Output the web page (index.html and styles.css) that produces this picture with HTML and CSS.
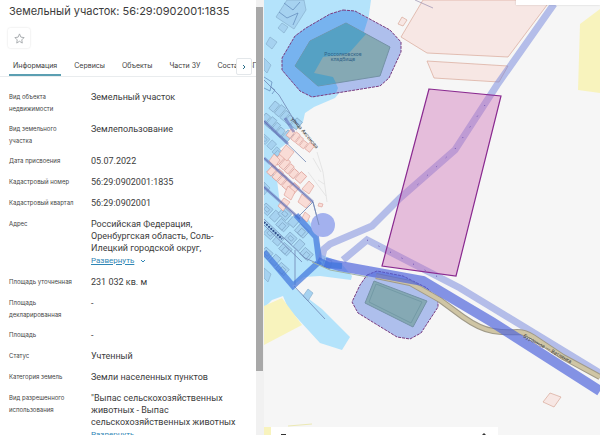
FILE: index.html
```
<!DOCTYPE html>
<html lang="ru">
<head>
    <meta charset="UTF-8">
    <meta name="viewport" content="width=device-width, initial-scale=1.0">
    <title>Земельный участок</title>
    <link rel="stylesheet" href="styles.css">
</head>
<body>
    <div class="layout">
        <aside class="panel">
            <h1>Земельный участок: 56:29:0902001:1835</h1>
            <button class="favorite" aria-label="В избранное">
                <svg viewBox="0 0 24 24"><path d="M12 2l3 7 7 1-5 5 1 7-6-4-6 4 1-7-5-5 7-1z"/></svg>
            </button>
            <nav class="tabs">
                <button class="tab active">Информация</button>
                <button class="tab">Сервисы</button>
                <button class="tab">Объекты</button>
                <button class="tab">Части ЗУ</button>
                <button class="tab">Состав ЕЗП</button>
                <button class="tabs-next" aria-label="Далее">
                    <svg viewBox="0 0 8 8"><path d="M3 2l2 2-2 2"/></svg>
                </button>
            </nav>
            <dl class="info">
                <div class="row"><dt>Вид объекта недвижимости</dt><dd>Земельный участок</dd></div>
                <div class="row"><dt>Вид земельного участка</dt><dd>Землепользование</dd></div>
                <div class="row"><dt>Дата присвоения</dt><dd>05.07.2022</dd></div>
                <div class="row"><dt>Кадастровый номер</dt><dd>56:29:0902001:1835</dd></div>
                <div class="row"><dt>Кадастровый квартал</dt><dd>56:29:0902001</dd></div>
                <div class="row">
                    <dt>Адрес</dt>
                    <dd>Российская Федерация, Оренбургская область, Соль-Илецкий городской округ,
                        <div class="more"><a href="#">Развернуть</a>
                        <svg viewBox="0 0 8 8"><path d="M2 3l2 2 2-2"/></svg></div>
                    </dd>
                </div>
                <div class="row"><dt>Площадь уточненная</dt><dd>231 032 кв. м</dd></div>
                <div class="row"><dt>Площадь декларированная</dt><dd>-</dd></div>
                <div class="row"><dt>Площадь</dt><dd>-</dd></div>
                <div class="row"><dt>Статус</dt><dd>Учтенный</dd></div>
                <div class="row"><dt>Категория земель</dt><dd>Земли населенных пунктов</dd></div>
                <div class="row">
                    <dt>Вид разрешенного использования</dt>
                    <dd>"Выпас сельскохозяйственных животных - Выпас сельскохозяйственных животных
                        <div class="more"><a href="#">Развернуть</a></div>
                    </dd>
                </div>
            </dl>
        </aside>
        <div class="scrollbar"><div class="thumb"></div></div>
        <main class="map">
            <svg class="map-canvas" viewBox="264 0 336 435" preserveAspectRatio="xMidYMid slice">
                <defs>
                    <g id="houses">
                        <path d="M0 0h5v8H0zM6-1h5v9H6zM12 0h4v8h-4zM17 1h5v7h-5zM23-1h6v8h-6z"/>
                    </g>
                    <g id="yards">
                        <path d="M0 0h8v7H0zM2 2h4v3H2zM10-1h6v8h-6zM18 1h9v7h-9zM21 3h4v5h-4z"/>
                    </g>
                </defs>

                <!-- water protection zone -->
                <path class="zone" d="M264 0H371L368 22 362 38 350 52 345 86 335 98 314 107 305 113 303 122 296 128 283 130 288 142 276 152 268 162 277 180 280 204 298 222 306 214 318 238 322 255 340 262 352 276 351 280 320 276 304 277 292 286 322 309 350 337 342 350 320 343 288 308 283 296 272 300 264 308Z"/>

                <!-- fields -->
                <path class="field" d="M600 9L580 24 578 90 600 93zM264 306L282 298 302 325 264 345zM264 427h8v8h-8z"/>
                <path class="field-line" d="M288 426l24-2"/>
                <path class="lot" d="M423 0L401 37 427 53 508 57 547 5 550 0zM427 61L508 66 499 82 434 78z"/>
                <path class="lot" d="M550 393L561 397 554 407 543 402zM398 24l4-7 5 3-4 6z"/>
                <path class="lot-line" d="M415 0l18 8"/>

                <!-- village houses -->
                <path class="yard" d="M276 17L287 0H304L306 10 294 29zM282 23l6 4-4 6-6-5zM270 37l7 5-5 7-6-5zM264 58l7 7-4 8-3-3z"/>
                <path class="yard-line" d="M279 12l8 6 11-5-5 12M284 3l9 7 7-8M264 77l8 5-2 9-6-3M271 87l4 3-3 4"/>
                <g class="yard">
                    <use href="#houses" transform="translate(275 101) rotate(40) scale(1.2)"/>
                    <use href="#houses" transform="translate(266 113) rotate(40) scale(1.2)"/>
                    <use href="#yards" transform="translate(264 134) rotate(42)"/>
                    <use href="#yards" transform="translate(266 203) rotate(42) scale(1.2)"/>
                    <use href="#yards" transform="translate(284 207) rotate(42) scale(1.3)"/>
                    <use href="#yards" transform="translate(269 227) rotate(42) scale(1.2)"/>
                    <use href="#yards" transform="translate(290 232) rotate(42) scale(1.2)"/>
                    <use href="#yards" transform="translate(266 247) rotate(42) scale(1.2)"/>
                    <path d="M308 289l5 4-5 8-5-5zM264 268l7 6-3 8-4-4zM325 258l7 3-2 8-8-3zM264 182l6 6-6 7z"/>
                </g>
                <g class="house">
                    <use href="#houses" transform="translate(291 129) rotate(38) scale(1)"/>
                    <use href="#houses" transform="translate(280 154) rotate(42) scale(1.2)"/>
                    <use href="#houses" transform="translate(273 165) rotate(42) scale(1.2)"/>
                    <path d="M286 145l8 7-7 9-8-7zM274 154l6 6-5 7-6-6zM309 181l5 5-5 8-7-5zM302 194l9 8-5 6-8-6zM288 186l7 6-4 8-7-5zM284 198l6 4-7 9-5-5zM305 212l5 4-3 6-5-4zM319 203l4 1-1 3-4-1z"/>
                </g>
                <path class="track" d="M317 152l6 20 4 30M313 158l8 14M308 172l18 24M318 180l6 4"/>

                <!-- streets -->
                <path class="street" d="M264 121L306 162M264 158L313 202 319 225M313 202L299 216M264 187L300 219M264 80l15 15 18 30"/>
                <path class="street dark" d="M264 121L288 144M264 158L313 202M264 187L300 219M285 118l9 14"/>
                <path class="street" d="M264 219L305 258 330 269M264 225L302 262M294 286L325 319M295 250V285"/>
                <path class="street-dash" d="M264 222L282 239"/>
                <path class="river" d="M264 252L293 286 320 261M296 215L316 237 319 260"/>
                <circle class="pond" cx="323" cy="225" r="12"/>
                <path class="street" d="M313 202l6 23"/>
                <text class="map-label" transform="translate(291 119) rotate(50)">улица Аксенова</text>

                <!-- small cadastral strips -->
                <path class="strip" d="M554 4L497 85 455 150 400 198 372 226 330 244 324 249 321 261"/>
                <path class="strip" d="M343 260L367 240 460 288 600 373"/>

                <!-- sanitary zones -->
                <path class="buffer" d="M343 10L355 11 390 30 401 42 401 52 389 78 380 86 312 97 300 91 282 70 282 58 295 36 306 28 330 14z"/>
                <path class="buffer-blue" d="M343 10L355 11 368 19 362 38 350 52 323 57 314 66 315 72 333 77 338 88 336 93 312 97 300 91 282 70 282 58 295 36 306 28 330 14z"/>
                <path class="buffer-edge" d="M343 10L355 11 390 30 401 42 401 52 389 78 380 86 312 97 300 91 282 70 282 58 295 36 306 28 330 14z"/>
                <path class="site" d="M346 23L390 47 380 76 318 86 295 66 310 41z"/>
                <path class="site-blue" d="M346 23L366 34 350 52 346 54 323 57 314 73 333 77 336 83 318 86 295 66 310 41z"/>
                <text class="site-label" x="343" y="56">Россолковское</text>
                <text class="site-label" x="343" y="61">кладбище</text>
                <path class="buffer" d="M367 275L377 271 403 276 427 288 438 300 438 307 421 333 410 339 397 337 358 313 352 302 360 285z"/>
                <path class="buffer-edge" d="M367 275L377 271 403 276 427 288 438 300 438 307 421 333 410 339 397 337 358 313 352 302 360 285z"/>
                <path class="site" d="M374 281L427 301 413 327 365 303z"/>
                <path class="site-line" d="M376 284L422 302 411 323 369 302z"/>

                <!-- road -->
                <path class="thin-road" d="M312 262L330 270 368 277"/>
                <path class="road-edge" d="M376 276L410 283 440 300 463 317Q480 329 493 331T517 332Q525 332 533 337L563 357 600 377"/>
                <path class="road" d="M376 276L410 283 440 300 463 317Q480 329 493 331T517 332Q525 332 533 337L563 357 600 377"/>
                <path class="canal" d="M325 262L340 266 423 281 460 303 492 322 600 391"/>
                <path class="river" d="M318 260L328 265 342 266"/>
                <text class="map-label" transform="translate(523 337) rotate(29)">Буранное — Ветлянка</text>

                <!-- selected parcel -->
                <path class="selected" d="M429 89L501 96 456 276 382 266z"/>
                <path class="dots" d="M485 105L455 149 412 190M367 240L440 278"/>
            </svg>
            <div class="search-box"></div>
            <div class="bottom-box">
                <svg viewBox="0 0 227 8"><path d="M10 8V7h5v1zM211 8l2-2 2 2z"/></svg>
            </div>
        </main>
    </div>
</body>
</html>
```

FILE: styles.css
```
* {
    box-sizing: border-box;
}
body {
    margin: 0;
    font-family: Inter, "Liberation Sans", sans-serif;
    color: #3c3c3c;
    background-color: #fff;
}
.layout {
    display: flex;
    height: 100vh;
    overflow: hidden;
}
.panel {
    flex: 0 0 256px;
    overflow: hidden;
}
h1 {
    margin: 4px 9px 0;
    font-size: 11px;
    line-height: 14px;
    font-weight: 400;
}
button {
    font-family: inherit;
    color: inherit;
    padding: 0;
    border: 0;
    background: none;
}
.favorite {
    display: flex;
    align-items: center;
    justify-content: center;
    width: 22px;
    height: 20px;
    margin: 10px 0 0 8px;
    border-radius: 2px;
    box-shadow: 0 0 2px rgba(0, 0, 0, 0.15);
}
.favorite svg {
    width: 11px;
    height: 11px;
    fill: none;
    stroke: #a3a7ab;
    stroke-width: 2;
}
.tabs {
    position: relative;
    display: flex;
    gap: 9px;
    height: 20px;
    margin-top: 9px;
    padding-left: 9px;
    border-bottom: 1px solid #e9ecee;
    overflow: hidden;
}
.tab {
    flex: none;
    height: 19px;
    padding: 0 4px;
    font-size: 7px;
    line-height: 14px;
    border-bottom: 2px solid transparent;
}
.tab.active {
    border-color: #5b9fb2;
}
.tabs-next {
    position: absolute;
    right: 4px;
    top: 1px;
    display: flex;
    align-items: center;
    justify-content: center;
    width: 16px;
    height: 17px;
    border: 1px solid #e3e7ea;
    border-radius: 2px;
    background-color: #fff;
}
.tabs-next svg {
    width: 8px;
    height: 8px;
    fill: none;
    stroke: #2b6f8a;
}
.info {
    display: flex;
    flex-direction: column;
    gap: 8px;
    margin: 14px 9px 0;
}
.row {
    display: grid;
    grid-template-columns: 72px 148px;
    column-gap: 10px;
    min-height: 13px;
}
dt {
    font-size: 6px;
    line-height: 12px;
    color: #444;
}
dd {
    margin: 0;
    font-family: Roboto, "Liberation Sans", sans-serif;
    font-size: 9px;
    line-height: 12px;
}
.more {
    display: flex;
    align-items: center;
    gap: 5px;
    height: 14px;
    font-size: 8px;
}
.more a {
    color: #2f86b5;
}
.more svg {
    width: 8px;
    height: 8px;
    fill: none;
    stroke: #2f86b5;
}
.scrollbar {
    flex: 0 0 8px;
    padding-top: 7px;
    background-color: #f1f1f1;
}
.thumb {
    width: 7px;
    height: 85%;
    background-color: #a8a8a8;
}
.map {
    position: relative;
    flex: 1;
    overflow: hidden;
    background-color: #f6f6f6;
}
.map-canvas {
    display: block;
    width: 100%;
    height: 100%;
    fill: none;
}
.zone {
    fill: #b4e3fb;
}
.field {
    fill: #f8f3bd;
}
.field-line {
    stroke: #ece9b4;
}
.lot {
    fill: #f7e7e4;
    stroke: #d8a798;
    stroke-width: 0.7;
}
.lot-line {
    stroke: #9a8fb0;
    stroke-width: 0.7;
}
.yard {
    fill: #a6d2f0;
    stroke: #83a9c8;
    stroke-width: 0.6;
}
.yard-line {
    stroke: #5f86b8;
    stroke-width: 0.7;
}
.house {
    fill: #f9dcd6;
    stroke: #dc9a92;
    stroke-width: 0.6;
}
.track {
    stroke: #dcdcdc;
    stroke-width: 0.7;
}
.street {
    stroke: #6f86b4;
    stroke-width: 1;
    opacity: 0.8;
}
.street.dark {
    stroke: #5560b0;
    stroke-width: 3;
    opacity: 0.5;
}
.street-dash {
    stroke: #33508c;
    stroke-width: 2;
    stroke-dasharray: 2 1;
}
.river {
    stroke: #3f74dc;
    stroke-width: 6;
    opacity: 0.7;
}
.pond {
    fill: #a3b1ee;
}
.strip {
    stroke: #7184db;
    stroke-width: 7;
    opacity: 0.5;
}
.canal {
    stroke: #4c63dc;
    stroke-width: 10;
    opacity: 0.68;
}
.buffer {
    fill: #aebfec;
}
.buffer-blue {
    fill: #77b3ef;
}
.buffer-edge {
    stroke: #7a3c80;
    stroke-width: 1;
    stroke-dasharray: 3 1;
}
.site {
    fill: #85a9b4;
    stroke: #7492a6;
}
.site-blue {
    fill: #55a1c4;
}
.site-line {
    stroke: #739aa6;
}
.site-label {
    font-size: 5px;
    text-anchor: middle;
    fill: #2d5f86;
}
.map-label {
    font-size: 5px;
    fill: #333;
}
.thin-road {
    stroke: #9fb4a6;
}
.road-edge {
    stroke: #a09a88;
    stroke-width: 6;
}
.road {
    stroke: #cfc5a4;
    stroke-width: 4;
}
.selected {
    fill: rgba(205, 105, 180, 0.4);
    stroke: #8a2a90;
    stroke-width: 1.2;
}
.dots {
    stroke: #6a4fb0;
    stroke-width: 1;
    stroke-dasharray: 1 12;
}
.search-box {
    position: absolute;
    top: 0;
    right: 0;
    width: 25%;
    height: 5px;
    background-color: #fff;
    box-shadow: 0 0 2px rgba(0, 0, 0, 0.2);
}
.bottom-box {
    position: absolute;
    left: 7px;
    bottom: 0;
    width: 227px;
    height: 8px;
    background-color: #fff;
}
.bottom-box svg {
    display: block;
    fill: #333;
}
```
